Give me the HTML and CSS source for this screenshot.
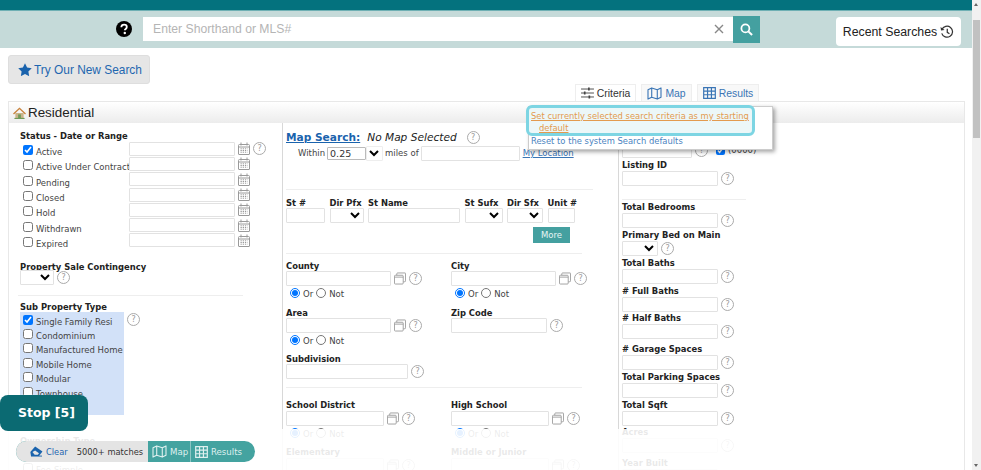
FILE: index.html
```html
<!DOCTYPE html>
<html lang="en">
<head>
    <meta charset="UTF-8" />
    <title>Residential Search</title>
    <link rel="stylesheet" href="styles.css">
</head>
<body>
    <svg class="defs" width="0" height="0">
        <symbol id="i-cal" viewBox="0 0 12 13">
            <path d="M.5 3.5a1 1 0 0 1 1-1h9a1 1 0 0 1 1 1V12a.5.5 0 0 1-.5.5H1a.5.5 0 0 1-.5-.5zM.5 5h11M3 .5v3M9 .5v3" fill="none" stroke="#9a9a9a"/>
            <path d="M2.5 6.800h7M2.500 8.500h7M2.500 10.200h7" stroke="#9a9a9a" stroke-dasharray="1.300 .9"/>
        </symbol>
        <symbol id="i-copy" viewBox="0 0 13 13">
            <path d="M3 3V1.500a1 1 0 0 1 1-1h8a.5.5 0 0 1 .5.5v8a1 1 0 0 1-1 1H10" fill="none" stroke="#9c9c9c"/>
            <rect x=".5" y="3" width="9.500" height="9.500" rx="1" fill="#fff" stroke="#9c9c9c"/>
            <path d="M.5 5H10" stroke="#9c9c9c"/>
        </symbol>
        <symbol id="i-map" viewBox="0 0 16 14">
            <path d="M1 3l4-2 6 2 4-2v10l-4 2-6-2-4 2zM5 1v10M11 3v10" fill="none" stroke="currentColor" stroke-width="1.200" stroke-linejoin="round"/>
        </symbol>
        <symbol id="i-table" viewBox="0 0 14 13">
            <path d="M.7.7h12.600v11.600H.7zM.7 4.500h12.600M.7 8.400h12.600M4.900.7v11.600M9.100.7v11.600" fill="none" stroke="currentColor" stroke-width="1.300"/>
        </symbol>
    </svg>

    <div class="app">
        <div class="page">
            <div class="top-line"></div>
            <div class="search-band">
                <svg class="big-help" viewBox="0 0 16 16"><circle cx="8" cy="8" r="8" fill="#000"/><path d="M5.300 6.200c.1-1.700 1.300-2.500 2.800-2.500 1.500 0 2.700.9 2.700 2.300 0 1.900-2 1.900-2 3.300" fill="none" stroke="#fff" stroke-width="1.800"/><circle cx="8.800" cy="12" r="1.200" fill="#fff"/></svg>
                <div class="search-box">
                    <span class="search-hint">Enter Shorthand or MLS#</span>
                    <svg class="clear-x" viewBox="0 0 10 10"><path d="M1 1l8 8M9 1l-8 8" stroke="#888" stroke-width="1.400"/></svg>
                </div>
                <div class="search-btn">
                    <svg viewBox="0 0 14 14" width="13" height="13"><circle cx="5.800" cy="5.800" r="4.300" fill="none" stroke="#fff" stroke-width="1.900"/><path d="M9 9l4 4" stroke="#fff" stroke-width="2.200"/></svg>
                </div>
                <div class="recent-btn">
                    Recent Searches
                    <svg viewBox="0 0 16 16" width="14" height="14"><path d="M2.200 5.200A6.300 6.300 0 1 1 2 9.500" fill="none" stroke="#333" stroke-width="1.400"/><path d="M.6 2.300l.6 4 4-.7z" fill="#333"/><path d="M8.300 4.400v4l2.500 1.700" fill="none" stroke="#333" stroke-width="1.400"/></svg>
                </div>
            </div>

            <div class="try-row">
                <a class="try-btn">
                    <svg viewBox="0 0 16 15" width="14" height="13"><path d="M8 .3l2.400 4.900 5.400.8-3.900 3.800.9 5.400L8 12.600l-4.800 2.600.9-5.400L.2 6l5.400-.8z" fill="#1a63ad"/></svg>
                    Try Our New Search
                </a>
            </div>

            <div class="tabs">
                <a class="tab tab-active">
                    <svg viewBox="0 0 14 13" width="13" height="12"><path d="M0 2.200h14M0 6.500h14M0 10.800h14" stroke="#444"/><path d="M8.500.6v3.200M4 4.900v3.200M9 9.200v3.200" stroke="#444" stroke-width="1.800"/></svg>
                    Criteria
                </a>
                <a class="tab tab-map"><svg width="15" height="13"><use href="#i-map"/></svg> Map</a>
                <a class="tab tab-results"><svg width="13" height="12"><use href="#i-table"/></svg> Results</a>
            </div>

            <div class="panel">
                <div class="panel-head">
                    <svg viewBox="0 0 14 13" width="13" height="12"><path d="M2.500 6.500v6h9v-6z" fill="#c9b48a"/><path d="M0 7l7-6.500L14 7l-1 1-6-5.500L1 8z" fill="#c9833c"/><path d="M5.500 8h3v4.500h-3z" fill="#6f9a58"/><path d="M1.500 11.800h11V13h-11z" fill="#6f9a58"/></svg>
                    Residential
                </div>

                <div class="panel-body">
                    <div class="col col-left">
                        <div class="lbl status-lbl">Status - Date or Range</div>
                        <div class="status-row"><label class="chk"><input type="checkbox" checked> Active</label><input class="txt date"><svg class="ic"><use href="#i-cal"/></svg><span class="help">?</span></div>
                        <div class="status-row"><label class="chk"><input type="checkbox"> Active Under Contract</label><input class="txt date"><svg class="ic"><use href="#i-cal"/></svg></div>
                        <div class="status-row"><label class="chk"><input type="checkbox"> Pending</label><input class="txt date"><svg class="ic"><use href="#i-cal"/></svg></div>
                        <div class="status-row"><label class="chk"><input type="checkbox"> Closed</label><input class="txt date"><svg class="ic"><use href="#i-cal"/></svg></div>
                        <div class="status-row"><label class="chk"><input type="checkbox"> Hold</label><input class="txt date"><svg class="ic"><use href="#i-cal"/></svg></div>
                        <div class="status-row"><label class="chk"><input type="checkbox"> Withdrawn</label><input class="txt date"><svg class="ic"><use href="#i-cal"/></svg></div>
                        <div class="status-row"><label class="chk"><input type="checkbox"> Expired</label><input class="txt date"><svg class="ic"><use href="#i-cal"/></svg></div>

                        <div class="lbl contingency">Property Sale Contingency</div>
                        <div class="ctl"><select class="sel w34"><option></option></select><span class="help">?</span></div>
                        <hr class="rule rule-left">

                        <div class="lbl">Sub Property Type</div>
                        <div class="sub-wrap">
                            <div class="sub-list">
                                <label class="chk"><input type="checkbox" checked> Single Family Resi</label>
                                <label class="chk"><input type="checkbox"> Condominium</label>
                                <label class="chk"><input type="checkbox"> Manufactured Home</label>
                                <label class="chk"><input type="checkbox"> Mobile Home</label>
                                <label class="chk"><input type="checkbox"> Modular</label>
                                <label class="chk"><input type="checkbox"> Townhouse</label>
                                <label class="chk"><input type="checkbox"> Twin Homes</label>
                            </div>
                            <span class="help">?</span>
                        </div>

                        <div class="lbl owner">Ownership Type</div>
                        <label class="chk fee"><input type="checkbox"> Fee-Simple</label>
                    </div>

                    <div class="col col-mid">
                        <div class="map-head">
                            <a class="map-link">Map Search:</a>
                            <em>No Map Selected</em>
                            <span class="help">?</span>
                        </div>
                        <div class="within">
                            Within
                            <input class="txt within-val" value="0.25">
                            <select class="sel within-sel"><option></option></select>
                            miles of
                            <input class="txt w99">
                            <a class="loc-link">My Location</a>
                        </div>
                        <hr class="rule rule-addr">

                        <div class="addr">
                            <div><div class="lbl">St #</div><input class="txt w39"></div>
                            <div><div class="lbl">Dir Pfx</div><select class="sel w34"><option></option></select></div>
                            <div><div class="lbl">St Name</div><input class="txt w92"></div>
                            <div><div class="lbl">St Sufx</div><select class="sel w38"><option></option></select></div>
                            <div><div class="lbl">Dir Sfx</div><select class="sel w36"><option></option></select></div>
                            <div><div class="lbl">Unit #</div><input class="txt w27"></div>
                        </div>
                        <div class="more-row"><a class="more-btn">More</a></div>
                        <hr class="rule rule-mid">

                        <div class="two">
                            <div class="cell h47">
                                <div class="lbl">County</div>
                                <div class="ctl"><input class="txt w105"><svg class="ic"><use href="#i-copy"/></svg><span class="help">?</span></div>
                                <div class="or-not"><input type="radio" name="r1" checked> Or <input type="radio" name="r1"> Not</div>
                            </div>
                            <div class="cell h47">
                                <div class="lbl">City</div>
                                <div class="ctl"><input class="txt w105"><svg class="ic"><use href="#i-copy"/></svg><span class="help">?</span></div>
                                <div class="or-not"><input type="radio" name="r2" checked> Or <input type="radio" name="r2"> Not</div>
                            </div>
                            <div class="cell h46">
                                <div class="lbl">Area</div>
                                <div class="ctl"><input class="txt w105"><svg class="ic"><use href="#i-copy"/></svg><span class="help">?</span></div>
                                <div class="or-not"><input type="radio" name="r3" checked> Or <input type="radio" name="r3"> Not</div>
                            </div>
                            <div class="cell h46">
                                <div class="lbl">Zip Code</div>
                                <div class="ctl"><input class="txt w96"><span class="help">?</span></div>
                            </div>
                            <div class="cell wide">
                                <div class="lbl">Subdivision</div>
                                <div class="ctl"><input class="txt w122"><span class="help">?</span></div>
                            </div>
                        </div>
                        <hr class="rule rule-school">

                        <div class="two">
                            <div class="cell h47">
                                <div class="lbl">School District</div>
                                <div class="ctl"><input class="txt w98"><svg class="ic"><use href="#i-copy"/></svg><span class="help">?</span></div>
                                <div class="or-not"><input type="radio" name="r4" checked> Or <input type="radio" name="r4"> Not</div>
                            </div>
                            <div class="cell h47">
                                <div class="lbl">High School</div>
                                <div class="ctl"><input class="txt w98"><svg class="ic"><use href="#i-copy"/></svg><span class="help">?</span></div>
                                <div class="or-not"><input type="radio" name="r5" checked> Or <input type="radio" name="r5"> Not</div>
                            </div>
                            <div class="cell">
                                <div class="lbl">Elementary</div>
                                <div class="ctl"><input class="txt w98"><svg class="ic"><use href="#i-copy"/></svg><span class="help">?</span></div>
                            </div>
                            <div class="cell">
                                <div class="lbl">Middle or Junior</div>
                                <div class="ctl"><input class="txt w98"><svg class="ic"><use href="#i-copy"/></svg><span class="help">?</span></div>
                            </div>
                        </div>
                    </div>

                    <div class="col col-right">
                        <div class="ctl stub"><input class="txt w70"><span class="help">?</span><input type="checkbox" class="stub-chk" checked> (0000)</div>
                        <div class="field"><div class="lbl">Listing ID</div><div class="ctl"><input class="txt w96"><span class="help">?</span></div></div>
                        <hr class="rule rule-right">
                        <div class="field"><div class="lbl">Total Bedrooms</div><div class="ctl"><input class="txt w96"><span class="help">?</span></div></div>
                        <div class="field"><div class="lbl">Primary Bed on Main</div><div class="ctl"><select class="sel w36"><option></option></select><span class="help">?</span></div></div>
                        <div class="field"><div class="lbl">Total Baths</div><div class="ctl"><input class="txt w96"><span class="help">?</span></div></div>
                        <div class="field"><div class="lbl"># Full Baths</div><div class="ctl"><input class="txt w96"><span class="help">?</span></div></div>
                        <div class="field gap3"><div class="lbl"># Half Baths</div><div class="ctl"><input class="txt w96"><span class="help">?</span></div></div>
                        <div class="field"><div class="lbl"># Garage Spaces</div><div class="ctl"><input class="txt w96"><span class="help">?</span></div></div>
                        <div class="field"><div class="lbl">Total Parking Spaces</div><div class="ctl"><input class="txt w96"><span class="help">?</span></div></div>
                        <div class="field"><div class="lbl">Total Sqft</div><div class="ctl"><input class="txt w96"><span class="help">?</span></div></div>
                        <div class="field gap3"><div class="lbl">Acres</div><div class="ctl"><input class="txt w96"><span class="help">?</span></div></div>
                        <div class="field"><div class="lbl">Year Built</div><div class="ctl"><input class="txt w96"><span class="help">?</span></div></div>
                    </div>
                </div>
            </div>

            <div class="fade"></div>

            <div class="defaults-menu">
                <a class="menu-on">Set currently selected search criteria as my starting default</a>
                <a class="menu-off">Reset to the system Search defaults</a>
            </div>

            <a class="stop-btn">Stop [5]</a>

            <div class="result-pill">
                <div class="pill-left">
                    <svg viewBox="0 0 14 12" width="13" height="11"><path d="M5.500.5L13.500 6l-3.800 5H1L.3 6.500z" fill="#1a63ad"/><path d="M1 11h12" stroke="#1a63ad" stroke-width="1"/><path d="M2.600 6.600l2.400 3h3.500l1.200-1.600-4.200-3z" fill="#e4e4e4"/></svg>
                    <a class="pill-clear">Clear</a>
                    <span class="pill-count">5000+ matches</span>
                </div>
                <a class="pill-btn pill-map"><svg width="15" height="13"><use href="#i-map"/></svg> Map</a>
                <a class="pill-btn pill-results"><svg width="13" height="12"><use href="#i-table"/></svg> Results</a>
            </div>
        </div>

        <div class="scrollbar">
            <span class="arrow-up"></span>
            <div class="thumb"></div>
            <span class="arrow-down"></span>
        </div>
    </div>
</body>
</html>
```
FILE: styles.css
```css
body {
    margin: 0;
    font-family: "DejaVu Sans", Verdana, sans-serif;
    font-size: 8.5px;
    color: #333;
    background-color: #fff;
}

.defs {
    position: absolute;
}

.app {
    display: flex;
    height: 470px;
    overflow: hidden;
}

.page {
    position: relative;
    width: 972px;
    height: 470px;
    overflow: hidden;
}

/* top bars */
.top-line {
    height: 10px;
    background-color: #04727e;
    border-bottom: 1px solid #6fb0b4;
}

.search-band {
    height: 37px;
    background-color: #c5dad9;
    display: flex;
    align-items: flex-start;
    font-family: "Liberation Sans", Arial, sans-serif;
}

.big-help {
    width: 16px;
    height: 16px;
    margin: 10px 11px 0 116px;
}

.search-box {
    width: 590px;
    height: 24px;
    margin-top: 6px;
    background-color: #fff;
    display: flex;
    align-items: center;
    justify-content: space-between;
    padding: 0 9px 0 10px;
    box-sizing: border-box;
}

.search-hint {
    color: #b5b5b5;
    font-size: 12.2px;
}

.clear-x {
    width: 10px;
    height: 10px;
}

.search-btn {
    width: 27px;
    height: 27px;
    margin-top: 5px;
    background-color: #44a0a0;
    display: flex;
    align-items: center;
    justify-content: center;
}

.recent-btn {
    width: 125px;
    height: 29px;
    margin: 6px 0 0 76px;
    background-color: #fff;
    border-radius: 4px;
    display: flex;
    align-items: center;
    justify-content: center;
    gap: 3px;
    font-size: 12.3px;
    color: #222;
}

.try-row {
    padding: 7px 0 0 8px;
    height: 29px;
}

.try-btn {
    width: 142px;
    height: 29px;
    box-sizing: border-box;
    display: flex;
    align-items: center;
    gap: 2px;
    padding-left: 9px;
    background-color: #e6e6e6;
    border: 1px solid #dedede;
    border-radius: 3px;
    color: #1f66b0;
    font-family: "Liberation Sans", Arial, sans-serif;
    font-size: 11.9px;
    white-space: nowrap;
}

/* tabs */
.tabs {
    display: flex;
    gap: 5px;
    height: 17px;
    margin: 0 0 0 575px;
    font-family: "Liberation Sans", Arial, sans-serif;
    font-size: 10.4px;
}

.tab {
    display: flex;
    align-items: center;
    justify-content: center;
    gap: 3px;
    height: 17px;
    box-sizing: border-box;
    border: 1px solid #eee;
    border-bottom: 0;
    color: #3a75b5;
    background-color: #f8f8f8;
}

.tab-active {
    width: 61px;
    color: #333;
    background-color: #fff;
}

.tab-map {
    width: 51px;
}

.tab-results {
    width: 62px;
}

/* panel */
.panel {
    margin: 0 7px 0 8px;
    border: 1px solid #e8e8e8;
    height: 400px;
    box-sizing: border-box;
}

.panel-head {
    height: 21px;
    display: flex;
    align-items: center;
    gap: 2px;
    padding-left: 4px;
    background: linear-gradient(#fff, #ececec);
    font-family: "Liberation Sans", Arial, sans-serif;
    font-size: 13.4px;
    color: #222;
}

.panel-body {
    display: grid;
    grid-template-columns: 273px 336px 1fr;
}

.col {
    height: 380px;
    box-sizing: border-box;
}

.col-left {
    padding: 8px 0 0 11px;
}

.col-mid {
    border-left: 1px solid #d8d8d8;
    padding: 7px 0 0 3px;
}

.col-right {
    border-left: 1px solid #d8d8d8;
    padding: 20px 0 0 3px;
}

/* shared bits */
.lbl {
    font-weight: bold;
    font-size: 8.4px;
    line-height: 11px;
    color: #222;
    white-space: nowrap;
}

.txt {
    height: 15px;
    padding: 0 2px;
    margin: 0;
    box-sizing: border-box;
    border: 1px solid #e2e2e2;
    border-radius: 1px;
    background-color: #fff;
    font: 8.5px "DejaVu Sans", Verdana, sans-serif;
    color: #333;
    outline: none;
}

.sel {
    height: 15px;
    margin: 0;
    padding: 0;
    box-sizing: border-box;
    border: 1px solid #e2e2e2;
    border-radius: 1px;
    background-color: #fff;
    font-size: 9px;
}

.help {
    flex: none;
    width: 11px;
    height: 11px;
    border: 1px solid #aaa;
    border-radius: 50%;
    font-size: 8px;
    line-height: 11px;
    text-align: center;
    color: #999;
    margin-left: 3px;
    background-color: #fff;
}

.ic {
    flex: none;
    width: 12px;
    height: 13px;
    margin-left: 3px;
}

.ctl {
    display: flex;
    align-items: center;
}

.rule {
    border: 0;
    border-top: 1px solid #eeeeee;
    margin: 0;
}

.chk {
    display: flex;
    align-items: center;
    gap: 3px;
    padding: 7px 0 0 3px;
    color: #444;
    white-space: nowrap;
}

.chk input {
    width: 10px;
    height: 10px;
    margin: 0;
    flex: none;
    position: relative;
    top: -2px;
}

/* left column */
.status-lbl {
    margin-bottom: -1px;
}

.status-row {
    display: flex;
    align-items: center;
    height: 15.3px;
}

.status-row .chk {
    width: 106px;
    box-sizing: border-box;
}

.date {
    width: 106px;
    height: 14px;
    margin-left: 3px;
}

.contingency {
    margin-top: 14px;
    height: 8px;
}

.rule-left {
    margin: 10px 0 6px -2px;
    width: 225px;
}

.sub-wrap {
    display: flex;
    align-items: flex-start;
    margin-top: -1px;
}

.sub-list {
    width: 104px;
    height: 103px;
    padding: 4.5px 0 2px;
    box-sizing: border-box;
    background-color: #d2e1f8;
    display: flex;
    flex-direction: column;
    justify-content: space-between;
}

.sub-list .chk {
    padding-top: 0;
}

.sub-wrap .help {
    margin: 1px 0 0 3px;
}

.owner {
    margin-top: 21px;
}

.fee {
    margin-top: 11px;
}

/* middle column */
.map-head {
    display: flex;
    align-items: center;
    gap: 7px;
    font-size: 10.6px;
    height: 14px;
    color: #222;
}

.map-link {
    color: #1a63ad;
    font-weight: bold;
    text-decoration: underline;
}

.map-head .help {
    margin-left: 3px;
}

.within {
    display: flex;
    align-items: center;
    gap: 2px;
    margin: 2px 0 0 12px;
    height: 14px;
    color: #444;
}

.within-val {
    width: 39px;
    height: 13px;
    border-color: #bbb;
    font-size: 9.5px;
}

.within-sel {
    width: 17px;
    margin: 0 0 0 -2px;
    border-color: #eee;
}

.w99 {
    width: 99px;
}

.loc-link {
    margin-left: 1px;
    color: #3a75b5;
    text-decoration: underline;
}

.rule-addr {
    margin-top: 29px;
    width: 307px;
}

.addr {
    display: flex;
    gap: 4.5px;
    margin-top: 8px;
}

.addr .lbl {
    height: 10px;
}

.w27 { width: 27px; }
.w34 { width: 34px; }
.w36 { width: 36px; }
.w38 { width: 38px; }
.w39 { width: 39px; }
.w70 { width: 70px; }
.w92 { width: 92px; }
.w96 { width: 96px; }
.w98 { width: 98px; }
.w105 { width: 105px; }
.w122 { width: 122px; }

.more-row {
    display: flex;
    justify-content: flex-end;
    width: 284px;
    margin-top: 4px;
}

.more-btn {
    width: 37px;
    height: 16px;
    line-height: 16px;
    text-align: center;
    background-color: #44a0a0;
    color: #e6f4f4;
}

.rule-mid {
    margin-top: 10px;
    width: 296px;
}

.two {
    display: grid;
    grid-template-columns: 165px 150px;
    margin-top: 6.5px;
}

.cell .lbl {
    height: 10.5px;
}

.h47 {
    height: 47px;
}

.h46 {
    height: 46px;
}

.wide {
    grid-column: 1 / 3;
    height: 24px;
}

.or-not {
    display: flex;
    align-items: center;
    gap: 3px;
    margin: 1px 0 0 4px;
    height: 14px;
    color: #444;
}

.or-not input {
    width: 10px;
    height: 10px;
    margin: 0;
    position: relative;
    top: -1px;
}

.rule-school {
    margin-top: 9.5px;
    width: 296px;
}

.rule-school + .two {
    margin-top: 12px;
}

/* right column */
.stub {
    height: 14px;
    margin-bottom: 2.5px;
    color: #444;
    white-space: nowrap;
}

.stub-chk {
    width: 9px;
    height: 9px;
    margin: 0 3px 0 8px;
}

.field {
    height: 27.8px;
}

.col-right .field:first-of-type {
    height: 26px;
}

.gap3 {
    height: 30.5px;
}

.rule-right {
    margin: 11.5px 0 2.5px;
    width: 124px;
}

/* things on top of the panel */
.fade {
    position: absolute;
    left: 8px;
    top: 429px;
    width: 955px;
    height: 41px;
    background-color: rgba(255, 255, 255, 0.9);
}

.defaults-menu {
    position: absolute;
    left: 528px;
    top: 106px;
    width: 245px;
    height: 44px;
    background-color: #fff;
    border: 1px solid #ccc;
    box-sizing: border-box;
    box-shadow: 2px 2px 4px rgba(0, 0, 0, 0.35);
}

.menu-on {
    position: absolute;
    left: -3px;
    top: -2px;
    width: 229px;
    height: 31px;
    box-sizing: border-box;
    padding: 2px 2px 0 10px;
    text-indent: -8px;
    border: 3px solid #7dd5e3;
    border-radius: 6px;
    background-color: #ecf7f8;
    color: #e39a4e;
    font-size: 8.4px;
    line-height: 12px;
    text-decoration: underline;
}

.menu-off {
    position: absolute;
    left: 2px;
    top: 28px;
    color: #4a83c0;
    font-size: 8.4px;
    line-height: 12px;
    white-space: nowrap;
}

.stop-btn {
    position: absolute;
    left: 0;
    top: 395px;
    width: 88px;
    height: 36px;
    padding-left: 5px;
    box-sizing: border-box;
    line-height: 36px;
    text-align: center;
    background-color: #0b6a72;
    border-radius: 8px;
    color: #fff;
    font-weight: bold;
    font-size: 12.5px;
}

.result-pill {
    position: absolute;
    left: 16px;
    top: 441px;
    width: 239px;
    height: 21px;
    display: flex;
    border-radius: 11px;
    overflow: hidden;
    font-size: 8.6px;
    background-color: #44a3a0;
    color: #dff0ef;
}

.pill-left {
    width: 132px;
    flex: none;
    display: flex;
    align-items: center;
    padding-left: 14px;
    box-sizing: border-box;
    background-color: #e4e4e4;
    color: #333;
    font-size: 8.3px;
    white-space: nowrap;
}

.pill-clear {
    color: #1f66b0;
    margin: 0 9px 0 3px;
}

.pill-btn {
    display: flex;
    align-items: center;
    gap: 3px;
    padding-left: 4px;
    box-sizing: border-box;
}

.pill-map {
    width: 43px;
    border-right: 1px solid #8cc6c4;
}

.pill-results {
    flex: 1;
}

/* scrollbar */
.scrollbar {
    position: relative;
    width: 9px;
    height: 470px;
    background-color: #f1f1f1;
}

.thumb {
    position: absolute;
    left: 1px;
    top: 20px;
    width: 7px;
    height: 118px;
    background-color: #c1c1c1;
}

.arrow-up,
.arrow-down {
    position: absolute;
    left: 2px;
    width: 0;
    height: 0;
    border-left: 2.5px solid transparent;
    border-right: 2.5px solid transparent;
}

.arrow-up {
    top: 3px;
    border-bottom: 3px solid #666;
}

.arrow-down {
    bottom: 3px;
    border-top: 3px solid #666;
}
```
